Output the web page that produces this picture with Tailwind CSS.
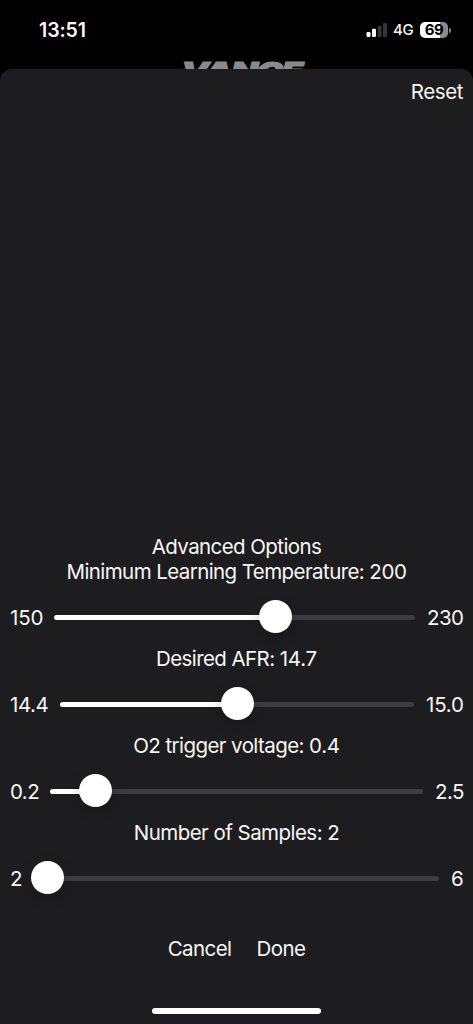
<!DOCTYPE html>
<html lang="en">
<head>
<meta charset="utf-8">
<title>Advanced Options</title>
<script src="https://cdn.jsdelivr.net/npm/@tailwindcss/browser@4"></script>
</head>
<body class="bg-black">
<div class="flex h-[1024px] w-[473px] flex-col overflow-hidden bg-black font-['Inter','Liberation_Sans',sans-serif] text-[20.5px] leading-[24.5px] tracking-[-0.58px] text-[#f7f7f7]">
  <header class="h-[69px] shrink-0 overflow-hidden">
    <div class="flex h-[60px] items-center justify-between pl-[39px] pr-[22px]">
      <div class="pt-px text-[19.5px] font-semibold tracking-[-0.1px]">13:51</div>
      <div class="flex items-center">
        <svg class="h-[14px] w-[21px]" viewBox="0 0 21 14">
          <rect x="0.5" y="9" width="4" height="5" rx="1.2" fill="#fff"/>
          <rect x="6" y="5.8" width="4" height="8.2" rx="1.2" fill="#fff"/>
          <rect x="11.6" y="3" width="4" height="11" rx="1.2" fill="#363636"/>
          <rect x="17" y="0" width="4" height="14" rx="1.2" fill="#363636"/>
        </svg>
        <span class="ml-[6px] w-[21px] whitespace-nowrap pt-px text-[15px] font-medium tracking-[-0.3px]">4G</span>
        <div class="ml-[6px] flex h-[16px] w-[28px] items-center justify-center rounded-[5px] bg-linear-to-r from-white from-71% to-[#8c8c8c] to-71% text-[15px] font-bold leading-[16px] tracking-[-0.4px] text-black">69</div>
        <div class="ml-[1px] h-[5px] w-[2px] rounded-r-full bg-[#858585]"></div>
      </div>
    </div>
    <div class="flex pl-[181px]">
      <div class="h-[22px] w-[122px] origin-top-left whitespace-nowrap text-[25px] font-black italic leading-[22px] tracking-[-1.2px] text-[#8a8a8a] scale-x-[1.42] [-webkit-text-stroke:0.9px_#8a8a8a]">VANCE</div>
    </div>
  </header>
  <main class="flex grow flex-col rounded-t-[12px] bg-[#1d1d1f]">
    <div class="flex justify-end pr-[10px] pt-[11px]"><button class="tracking-[-0.4px]">Reset</button></div>
    <section class="mt-auto flex flex-col text-center">
      <h1>Advanced Options</h1>
      <p>Minimum Learning Temperature: <span class="tracking-[-0.4px]">200</span></p>
      <div class="flex h-[62.5px] items-center justify-between px-[10px] pt-[5px]">
        <span class="tracking-[-0.2px]">150</span>
        <div class="relative ml-auto mr-[12px] h-[5px] w-[361px] rounded-full bg-[#3d3d41]">
          <div class="h-full w-[221px] rounded-full bg-white"></div>
          <div class="absolute left-[205px] top-[-15.5px] size-[33px] rounded-full bg-white shadow-[0_5px_14px_rgba(0,0,0,0.2)]"></div>
        </div>
        <span class="w-[36px] pr-[0.5px] text-right">230</span>
      </div>
      <p>Desired AFR: <span class="tracking-[-0.2px]">14.7</span></p>
      <div class="flex h-[62.5px] items-center justify-between px-[10px] pt-[5px]">
        <span class="tracking-[-0.4px]">14.4</span>
        <div class="relative ml-auto mr-[12px] h-[5px] w-[354px] rounded-full bg-[#3d3d41]">
          <div class="h-full w-[177px] rounded-full bg-white"></div>
          <div class="absolute left-[161px] top-[-15.5px] size-[33px] rounded-full bg-white shadow-[0_5px_14px_rgba(0,0,0,0.2)]"></div>
        </div>
        <span class="w-[37px] pr-[0.5px] text-right tracking-[-0.2px]">15.0</span>
      </div>
      <p>O2 trigger voltage: <span class="tracking-[-0.3px]">0.4</span></p>
      <div class="flex h-[62.5px] items-center justify-between px-[10px] pt-[5px]">
        <span>0.2</span>
        <div class="relative ml-auto mr-[12px] h-[5px] w-[373px] rounded-full bg-[#3d3d41]">
          <div class="h-full w-[45px] rounded-full bg-white"></div>
          <div class="absolute left-[29px] top-[-15.5px] size-[33px] rounded-full bg-white shadow-[0_5px_14px_rgba(0,0,0,0.2)]"></div>
        </div>
        <span class="w-[28px] pr-[0.5px] text-right">2.5</span>
      </div>
      <p class="tracking-[-0.54px]">Number of Samples: 2</p>
      <div class="flex h-[62.5px] items-center justify-between px-[10px] pt-[5px]">
        <span>2</span>
        <div class="relative ml-auto mr-[12px] h-[5px] w-[406px] rounded-full bg-[#3d3d41]">
          <div class="absolute left-[-1.7px] top-[-15.5px] size-[33px] rounded-full bg-white shadow-[0_5px_14px_rgba(0,0,0,0.2)]"></div>
        </div>
        <span class="w-[12px] pr-[0.5px] text-right">6</span>
      </div>
    </section>
    <div class="mt-[29.5px] flex justify-center gap-[25px]">
      <button>Cancel</button>
      <button>Done</button>
    </div>
    <div class="mb-[10px] mt-[46.5px] h-[6px] w-[169px] self-center rounded-full bg-white"></div>
  </main>
</div>
</body>
</html>
